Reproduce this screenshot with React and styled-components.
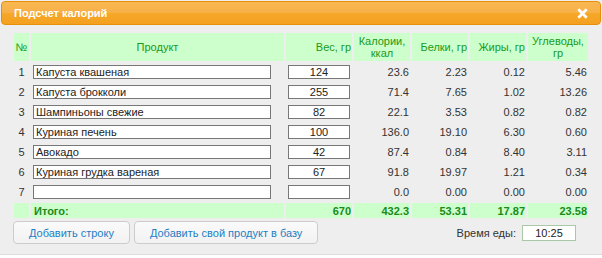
import React from "react";
import styled, { createGlobalStyle } from "styled-components";

const rows = [
	{ name: "Капуста квашеная", weight: "124", kcal: "23.6", prot: "2.23", fat: "0.12", carb: "5.46" },
	{ name: "Капуста брокколи", weight: "255", kcal: "71.4", prot: "7.65", fat: "1.02", carb: "13.26" },
	{ name: "Шампиньоны свежие", weight: "82", kcal: "22.1", prot: "3.53", fat: "0.82", carb: "0.82" },
	{ name: "Куриная печень", weight: "100", kcal: "136.0", prot: "19.10", fat: "6.30", carb: "0.60" },
	{ name: "Авокадо", weight: "42", kcal: "87.4", prot: "0.84", fat: "8.40", carb: "3.11" },
	{ name: "Куриная грудка вареная", weight: "67", kcal: "91.8", prot: "19.97", fat: "1.21", carb: "0.34" },
	{ name: "", weight: "", kcal: "0.0", prot: "0.00", fat: "0.00", carb: "0.00" },
];

const columns = [15, 253, 66, 56, 56, 56, 60];

const App = () => {
	return (
		<>
			<GlobalStyle />
			<Dialog>
				<TitleBar>
					<Title>Подсчет калорий</Title>
					<CloseIcon viewBox="0 0 12 12">
						<path d="M2.5 2.5 L9.5 9.5 M9.5 2.5 L2.5 9.5" stroke="#fff" strokeWidth="3" strokeLinecap="square" />
					</CloseIcon>
				</TitleBar>
				<Body>
					<Table>
						<colgroup>
							{columns.map((w, i) => (
								<col key={i} style={{ width: w }} />
							))}
						</colgroup>
						<thead>
							<tr>
								<Th>№</Th>
								<Th>Продукт</Th>
								<Th $align="right">Вес, гр</Th>
								<Th>
									Калории,
									<br />
									ккал
								</Th>
								<Th $align="right">Белки, гр</Th>
								<Th $align="right">Жиры, гр</Th>
								<Th>
									Углеводы,
									<br />
									гр
								</Th>
							</tr>
						</thead>
						<tbody>
							{rows.map((r, i) => (
								<Row key={i}>
									<Num>{i + 1}</Num>
									<Td>
										<NameInput defaultValue={r.name} />
									</Td>
									<Td>
										<WeightInput defaultValue={r.weight} />
									</Td>
									<Value>{r.kcal}</Value>
									<Value>{r.prot}</Value>
									<Value>{r.fat}</Value>
									<Value>{r.carb}</Value>
								</Row>
							))}
						</tbody>
						<tfoot>
							<tr>
								<Total />
								<Total $left>Итого:</Total>
								<Total>670</Total>
								<Total>432.3</Total>
								<Total>53.31</Total>
								<Total>17.87</Total>
								<Total>23.58</Total>
							</tr>
						</tfoot>
					</Table>
					<Footer>
						<Button>Добавить строку</Button>
						<Button>Добавить свой продукт в базу</Button>
						<Spacer />
						<TimeLabel>Время еды:</TimeLabel>
						<TimeInput defaultValue="10:25" />
					</Footer>
				</Body>
			</Dialog>
		</>
	);
};

export default App;

//STYLES
const GlobalStyle = createGlobalStyle`
	body {
		margin: 0;
		background: #ffffff;
		font-family: "Liberation Sans", Arial, sans-serif;
		font-size: 11px;
	}
`;

const Dialog = styled.div`
	width: 602px;
	height: 255px;
	box-sizing: border-box;
	background: #eeeeee;
	border-bottom: 1px solid #dddddd;
	display: flex;
	flex-direction: column;
`;

const TitleBar = styled.div`
	margin: 1px 1px 0;
	height: 24px;
	box-sizing: border-box;
	border: 1px solid #e78f08;
	border-radius: 4px;
	background: linear-gradient(#f8b852 0%, #f7b048 50%, #f6a828 51%, #f4a020 100%);
	display: flex;
	align-items: center;
	justify-content: space-between;
	padding: 0 12px 0 12px;
`;

const Title = styled.span`
	color: #ffffff;
	font-weight: bold;
	font-size: 11px;
`;

const CloseIcon = styled.svg`
	width: 11px;
	height: 11px;
`;

const Body = styled.div`
	padding: 6px 10px 0 12px;
	display: flex;
	flex-direction: column;
`;

const Table = styled.table`
	border-collapse: separate;
	border-spacing: 2px 2px;
	table-layout: fixed;
	width: 578px;
`;

const Th = styled.th`
	background: #ccffcc;
	color: #1a9a1a;
	font-weight: normal;
	font-size: 11px;
	line-height: 12px;
	height: 28px;
	padding: 0 1px;
	text-align: ${(p) => p.$align || "center"};
`;

const Row = styled.tr`
	height: 18px;
`;

const Td = styled.td`
	padding: 0 2px;
	color: #333333;
`;

const Num = styled(Td)`
	text-align: center;
`;

const Value = styled(Td)`
	text-align: right;
	padding-right: 1px;
`;

const BaseInput = styled.input`
	box-sizing: border-box;
	height: 14px;
	border: 1px solid #777777;
	background: #ffffff;
	font-family: "Liberation Sans", Arial, sans-serif;
	font-size: 11px;
	color: #222222;
	padding: 0 2px;
	margin: 0;
	display: block;
	outline: none;
`;

const NameInput = styled(BaseInput)`
	width: 238px;
`;

const WeightInput = styled(BaseInput)`
	width: 62px;
	text-align: center;
`;

const Total = styled.td`
	background: #ccffcc;
	color: #1a8a1a;
	font-weight: bold;
	height: 15px;
	padding: 0 1px;
	text-align: ${(p) => (p.$left ? "left" : "right")};
	padding-left: ${(p) => (p.$left ? "3px" : "1px")};
`;

const Footer = styled.div`
	display: flex;
	align-items: center;
	gap: 4px;
	padding: 1px 16px 0 1px;
`;

const Button = styled.button`
	height: 23px;
	padding: 0 15px;
	border: 1px solid #cccccc;
	border-radius: 4px;
	background: linear-gradient(#fafafa, #f2f2f2);
	color: #1c7fc4;
	font-family: "Liberation Sans", Arial, sans-serif;
	font-size: 11px;
	cursor: pointer;
`;

const Spacer = styled.div`
	flex: 1;
`;

const TimeLabel = styled.span`
	color: #333333;
	margin-right: 2px;
`;

const TimeInput = styled.input`
	box-sizing: border-box;
	width: 54px;
	height: 16px;
	border: 1px solid #a8c8a8;
	background: #ffffff;
	font-family: "Liberation Sans", Arial, sans-serif;
	font-size: 11px;
	color: #222222;
	text-align: center;
	padding: 0;
	outline: none;
`;
